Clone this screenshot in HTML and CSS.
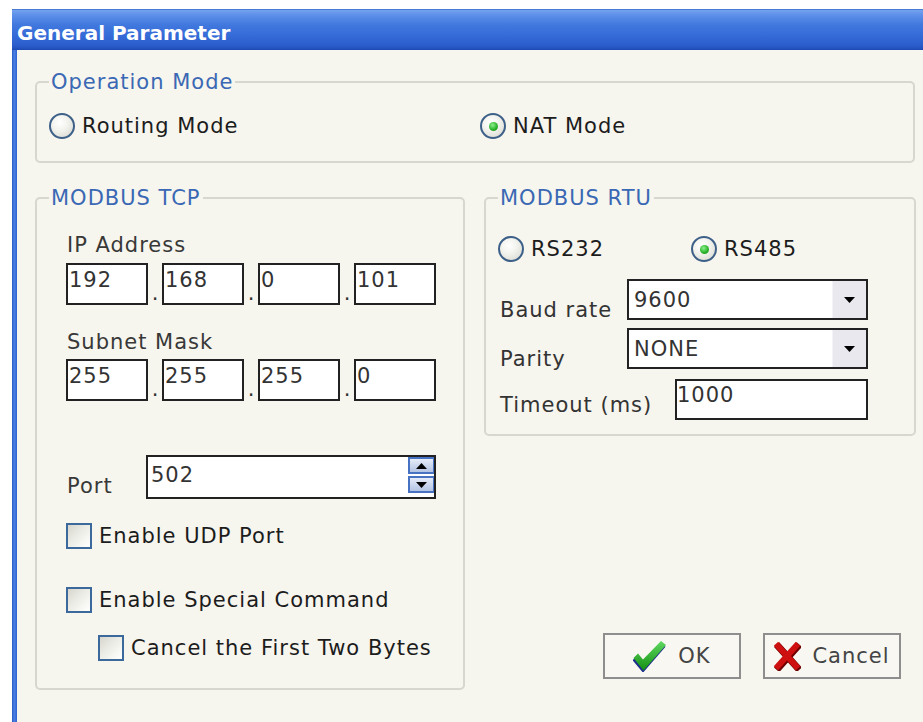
FILE: index.html
```html
<!DOCTYPE html>
<html lang="en">
<head>
<meta charset="utf-8">
<title>General Parameter</title>
<link rel="stylesheet" href="styles.css">
</head>
<body>
<div class="window">
  <div class="titlebar">General Parameter</div>
  <div class="client">
    <fieldset class="group op-group">
      <legend>Operation Mode</legend>
      <div class="op-row">
        <label class="opt op-first"><span class="radio"></span>Routing Mode</label>
        <label class="opt"><span class="radio on"></span>NAT Mode</label>
      </div>
    </fieldset>

    <div class="columns">
      <fieldset class="group tcp">
        <legend>MODBUS TCP</legend>
        <div class="pane">
          <div class="caption">IP Address</div>
          <div class="octets">
            <span class="field octet">192</span><span class="sep">.</span><span class="field octet">168</span><span class="sep">.</span><span class="field octet">0</span><span class="sep">.</span><span class="field octet">101</span>
          </div>
          <div class="caption subnet">Subnet Mask</div>
          <div class="octets">
            <span class="field octet">255</span><span class="sep">.</span><span class="field octet">255</span><span class="sep">.</span><span class="field octet">255</span><span class="sep">.</span><span class="field octet">0</span>
          </div>
          <div class="port-row">
            <span class="caption port-label">Port</span>
            <div class="field spin-field">
              <span class="spin-value">502</span>
              <span class="spin">
                <span class="spin-btn"><svg width="11" height="6" viewBox="0 0 11 6"><path d="M0 6 L5.5 0 L11 6 Z" fill="#000"/></svg></span>
                <span class="spin-btn"><svg width="11" height="6" viewBox="0 0 11 6"><path d="M0 0 L11 0 L5.5 6 Z" fill="#000"/></svg></span>
              </span>
            </div>
          </div>
          <label class="opt udp"><span class="check"></span>Enable UDP Port</label>
          <label class="opt special"><span class="check"></span>Enable Special Command</label>
          <label class="opt bytes"><span class="check"></span>Cancel the First Two Bytes</label>
        </div>
      </fieldset>

      <div class="right">
        <fieldset class="group rtu">
          <legend>MODBUS RTU</legend>
          <div class="rtu-radios">
            <label class="opt rtu-first"><span class="radio"></span>RS232</label>
            <label class="opt"><span class="radio on"></span>RS485</label>
          </div>
          <div class="rtu-row baud">
            <span class="rtu-label">Baud rate</span>
            <div class="field combo">
              <span class="combo-value">9600</span>
              <span class="combo-btn"><svg width="11" height="6" viewBox="0 0 11 6"><path d="M0 0 L11 0 L5.5 6 Z" fill="#000"/></svg></span>
            </div>
          </div>
          <div class="rtu-row parity">
            <span class="rtu-label">Parity</span>
            <div class="field combo">
              <span class="combo-value">NONE</span>
              <span class="combo-btn"><svg width="11" height="6" viewBox="0 0 11 6"><path d="M0 0 L11 0 L5.5 6 Z" fill="#000"/></svg></span>
            </div>
          </div>
          <div class="rtu-row timeout">
            <span class="rtu-label timeout-label">Timeout (ms)</span>
            <span class="field timeout-field">1000</span>
          </div>
        </fieldset>

        <div class="actions">
          <button class="btn" type="button">
            <svg width="34" height="31" viewBox="0 0 34 31">
              <defs>
                <linearGradient id="okg" x1="0" y1="0" x2="0" y2="1">
                  <stop offset="0" stop-color="#5fd85f"/>
                  <stop offset="1" stop-color="#149014"/>
                </linearGradient>
              </defs>
              <path d="M0 18 L5 13 L10 19.5 L28 0.5 L33 4.5 L10.5 30.5 Z" fill="#1c2e8c" transform="translate(-0.5 1.2)"/>
              <path d="M0.5 17 L5 12.5 L10 18.5 L28 0 L33 4 L10.5 29.5 Z" fill="url(#okg)"/>
            </svg>
            <span>OK</span>
          </button>
          <button class="btn" type="button">
            <svg width="27" height="29" viewBox="0 0 27 29">
              <g stroke="#6e0000" stroke-width="7" stroke-linecap="square" transform="translate(1 1.2)">
                <path d="M4 4 L22 24"/>
                <path d="M22 4 L4 24"/>
              </g>
              <g stroke="#cf1010" stroke-width="6" stroke-linecap="square">
                <path d="M4 4 L22 24"/>
                <path d="M22 4 L4 24"/>
              </g>
            </svg>
            <span>Cancel</span>
          </button>
        </div>
      </div>
    </div>
  </div>
</div>
</body>
</html>
```

FILE: styles.css
```css
* {
  box-sizing: border-box;
}

html,
body {
  margin: 0;
  height: 100%;
  overflow: hidden;
  background: #fff;
}

body {
  font-family: "DejaVu Sans", Verdana, sans-serif;
  font-size: 21px;
  line-height: 24px;
  letter-spacing: 1px;
  color: #1c1c1c;
}

/* dialog frame */
.window {
  margin: 9px 0 0 12px;
  height: calc(100% - 9px);
  display: flex;
  flex-direction: column;
  background: linear-gradient(to right, #2556c4 0, #4b80e2 2px, #3a6ed8 4px, #2c5fcf 5px);
}

.titlebar {
  flex: none;
  height: 41px;
  padding: 12px 0 0 5px;
  line-height: 24px;
  font-size: 20px;
  font-weight: bold;
  letter-spacing: 0;
  color: #fff;
  background: linear-gradient(to bottom,
      #2150b8 0, #74a3ef 1px, #5d90e9 6px, #4178de 16px,
      #3369d6 28px, #2b5ecc 36px, #2150bb 40px, #1b48ad 41px);
}

.client {
  flex: 1;
  margin-left: 5px;
  background: #f6f5ee;
}

/* group boxes */
.group {
  margin: 0;
  min-width: 0;
  border: 2px solid #d7d6cf;
  border-radius: 5px;
}

.group legend {
  padding: 0 2px;
  line-height: 24px;
  color: #3a68b4;
}

.op-group {
  margin: 20px 8px 0 18px;
  padding: 19px 12px 22px;
}

.op-row {
  display: flex;
}

.op-first {
  width: 431px;
}

.opt {
  display: flex;
  align-items: center;
  gap: 7px;
  white-space: nowrap;
}

/* radio buttons */
.radio {
  flex: none;
  width: 26px;
  height: 26px;
  border-radius: 50%;
  border: 2px solid #3d6088;
  background: radial-gradient(circle at 40% 35%, #ffffff 0, #f1f1ec 45%, #d4d4cc 100%);
  display: flex;
  align-items: center;
  justify-content: center;
}

.radio.on::after {
  content: "";
  width: 9px;
  height: 9px;
  border-radius: 50%;
  background: radial-gradient(circle at 40% 35%, #8ef08e 0, #2cb52c 55%, #168a16 100%);
}

/* check boxes */
.check {
  flex: none;
  width: 26px;
  height: 26px;
  border: 2px solid #3b699c;
  background: linear-gradient(135deg, #d6d6ce 0, #ecece6 45%, #fcfcfa 90%);
}

/* two columns */
.columns {
  display: flex;
  gap: 19px;
  margin: 23px 7px 0 18px;
}

.tcp {
  flex: none;
  width: 430px;
  padding: 23px 12px 27px;
}

.pane {
  padding-left: 17px;
}

.caption {
  margin-left: 1px;
  color: #383838;
}

.subnet {
  margin-top: 25px;
}

.octets {
  display: flex;
  margin-top: 6px;
}

.subnet + .octets {
  margin-top: 5px;
}

.field {
  background: #fff;
  border: 2px solid #222;
  color: #333;
  white-space: nowrap;
  overflow: hidden;
}

.octet {
  width: 82px;
  height: 42px;
  padding: 3px 0 0 1px;
}

.sep {
  width: 14px;
  align-self: flex-end;
  text-align: center;
  letter-spacing: 0;
  color: #333;
}

.port-row {
  display: flex;
  align-items: flex-end;
  margin-top: 54px;
}

.port-label {
  width: 79px;
  margin-bottom: 1px;
}

.spin-field {
  width: 290px;
  height: 44px;
  display: flex;
  padding-left: 3px;
}

.spin-value {
  flex: 1;
  padding-top: 6px;
}

.spin {
  display: flex;
  flex-direction: column;
  gap: 2px;
  width: 27px;
  margin-right: -1px;
}

.spin-btn {
  height: 17px;
  border: 2px solid #4771c2;
  background: linear-gradient(#e6ecf8, #b3c3e3);
  display: flex;
  align-items: center;
  justify-content: center;
}

.udp {
  margin-top: 24px;
}

.special {
  margin-top: 38px;
}

.bytes {
  margin-top: 22px;
  margin-left: 32px;
}

/* right column */
.right {
  flex: 1;
  display: flex;
  flex-direction: column;
}

.rtu {
  padding: 26px 14px 14px 12px;
}

.rtu-radios {
  display: flex;
}

.rtu-first {
  width: 193px;
}

.rtu-row {
  display: flex;
  align-items: flex-end;
}

.baud {
  margin-top: 17px;
}

.parity {
  margin-top: 8px;
}

.timeout {
  margin-top: 10px;
}

.rtu-label {
  width: 129px;
  padding-left: 2px;
  margin-bottom: -2px;
  color: #333;
}

.timeout-label {
  width: 177px;
  margin-bottom: 3px;
}

.combo {
  width: 241px;
  height: 41px;
  display: flex;
  align-items: center;
  padding-left: 5px;
}

.combo-value {
  flex: 1;
}

.combo-btn {
  width: 34px;
  align-self: stretch;
  background: #e8e8ee;
  border-left: 1px solid #f4f4f8;
  display: flex;
  align-items: center;
  justify-content: center;
}

.timeout-field {
  width: 193px;
  height: 41px;
  padding-top: 2px;
}

/* dialog buttons */
.actions {
  margin-top: auto;
  margin-bottom: 11px;
  display: flex;
  justify-content: flex-end;
  gap: 22px;
  padding-right: 15px;
}

.btn {
  width: 138px;
  height: 46px;
  border: 2px solid #8e8e8e;
  background: #f8f7f2;
  display: flex;
  align-items: center;
  justify-content: center;
  gap: 11px;
  padding: 0;
  font: inherit;
  letter-spacing: inherit;
  color: #444;
}
```
